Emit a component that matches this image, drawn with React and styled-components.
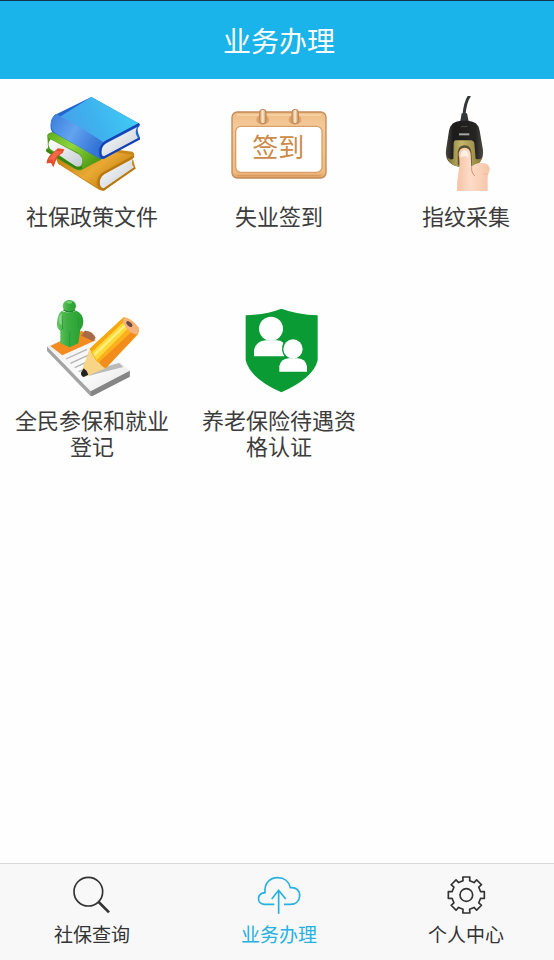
import React, { useState } from 'react';
import styled, { createGlobalStyle } from 'styled-components';

const BooksIcon = () => (
    <TileIcon viewBox="42 33 288 288" aria-hidden="true">
        <defs>
            <linearGradient id="blueTop" x1="0" y1="0.6" x2="1" y2="0.3">
                <stop offset="0" stopColor="#4a9bea" />
                <stop offset="0.5" stopColor="#3fb2ee" />
                <stop offset="1" stopColor="#3fd0f5" />
            </linearGradient>
            <linearGradient id="blueSpine" x1="0" y1="0" x2="1" y2="0.5">
                <stop offset="0" stopColor="#3a7cdc" />
                <stop offset="0.5" stopColor="#62a4f0" />
                <stop offset="1" stopColor="#3474d6" />
            </linearGradient>
            <linearGradient id="greenSpine" x1="0" y1="0" x2="1" y2="0.6">
                <stop offset="0" stopColor="#5cab1c" />
                <stop offset="0.5" stopColor="#8fd63c" />
                <stop offset="1" stopColor="#4f9c14" />
            </linearGradient>
            <linearGradient id="goldSpine" x1="0" y1="0" x2="1" y2="0.6">
                <stop offset="0" stopColor="#b87408" />
                <stop offset="0.6" stopColor="#e9aa34" />
                <stop offset="1" stopColor="#c07c0c" />
            </linearGradient>
            <linearGradient id="pages" x1="0" y1="0" x2="1" y2="1">
                <stop offset="0" stopColor="#ffffff" />
                <stop offset="1" stopColor="#c3cbd2" />
            </linearGradient>
        </defs>
        {/* gold book */}
        <path d="M76 214L200 186L308 200Q318 208 308 219L316 248L222 317Q208 318 200 310L84 236Z" fill="#c88718" />
        <path d="M76 216L182 190L312 210L214 264Q196 280 200 306L88 238Z" fill="url(#goldSpine)" />
        <path d="M309 221Q301 236 313 248L222 310Q206 306 210 284Q213 272 224 266Z" fill="url(#pages)" />
        <path d="M312 214L220 266Q205 276 206 296Q207 315 222 313L316 248" fill="none" stroke="#b9780f" strokeWidth="6" />
        {/* green book */}
        <path d="M52 151Q54 143 70 141L180 170L214 222L156 254Q146 258 136 253L50 201Q44 192 54 189Z" fill="#4b9a18" />
        <path d="M62 163Q50 178 60 191L134 242Q146 248 154 241Q164 222 146 208Z" fill="url(#pages)" />
        <path d="M70 142L52 151Q52 159 62 163L144 203Q165 218 155 251L214 224L208 190Z" fill="url(#greenSpine)" />
        <path d="M51 196L138 248Q146 252 156 247" fill="none" stroke="#32830f" strokeWidth="6" />
        {/* bookmark */}
        <path d="M84 190L103 193L98 204Q82 212 78 226L70 247L63 234L49 235Q52 216 65 206Z" fill="#e34e2b" />
        <path d="M78 197L97 200Q76 211 70 231L66 222L56 226Q62 210 78 197Z" fill="#f1694a" />
        {/* blue book */}
        <path d="M184 36L328 116Q332 121 325 127Q319 136 331 160L223 220Q211 225 203 217L66 140Q58 128 64 106L74 90Z" fill="#2366cf" />
        <path d="M184 36L328 116L226 169Q210 176 206 187L74 91Q66 98 66 110Z" fill="url(#blueTop)" />
        <path d="M78 87Q60 97 64 124Q65 137 76 145L206 220Q207 207 205 194Q208 180 220 172Q150 124 78 87Z" fill="url(#blueSpine)" />
        <path d="M321 127Q312 144 324 159L222 214Q211 211 215 191Q219 179 232 173Z" fill="url(#pages)" />
        <path d="M328 117L228 170Q211 180 211 202Q211 220 222 218L330 160" fill="none" stroke="#153fb5" strokeWidth="6" strokeLinejoin="round" />
    </TileIcon>
);

const CalendarIcon = () => (
    <TileIcon viewBox="42 33 288 288" aria-hidden="true">
        <defs>
            <linearGradient id="wood" x1="0" y1="0" x2="0" y2="1">
                <stop offset="0" stopColor="#f0bd85" />
                <stop offset="0.2" stopColor="#f4c898" />
                <stop offset="0.9" stopColor="#f0bb84" />
                <stop offset="1" stopColor="#e3a468" />
            </linearGradient>
            <linearGradient id="ring" x1="0" y1="0" x2="1" y2="0">
                <stop offset="0" stopColor="#d39a5f" />
                <stop offset="0.5" stopColor="#fdebd2" />
                <stop offset="1" stopColor="#c98a50" />
            </linearGradient>
        </defs>
        <rect x="45" y="81" width="282" height="198" rx="16" fill="url(#wood)" stroke="#c28a56" strokeWidth="4" />
        <path d="M60 90H312" stroke="#fbdcb7" strokeWidth="3" />
        <path d="M60 272H312" stroke="#d99a5e" strokeWidth="4" />
        <rect x="56" y="124" width="259" height="138" rx="16" fill="#fff" stroke="#d9a16a" strokeWidth="4" />
        <ellipse cx="137" cy="104" rx="19" ry="15" fill="#dca26a" />
        <ellipse cx="234" cy="104" rx="19" ry="15" fill="#dca26a" />
        <rect x="128" y="73" width="19" height="43" rx="9" fill="url(#ring)" stroke="#b98555" strokeWidth="3" />
        <rect x="225" y="73" width="19" height="43" rx="9" fill="url(#ring)" stroke="#b98555" strokeWidth="3" />
        <IconText x="184" y="216" textAnchor="middle">签到</IconText>
    </TileIcon>
);

const ScannerIcon = () => (
    <TileIcon viewBox="0 6 288 288" aria-hidden="true">
        <defs>
            <linearGradient id="scannerBody" x1="0" y1="0" x2="1" y2="0">
                <stop offset="0" stopColor="#4a4843" />
                <stop offset="0.2" stopColor="#1c1b1a" />
                <stop offset="0.8" stopColor="#252422" />
                <stop offset="1" stopColor="#4d4b45" />
            </linearGradient>
            <linearGradient id="brass" x1="0" y1="0" x2="1" y2="0">
                <stop offset="0" stopColor="#7f7434" />
                <stop offset="0.4" stopColor="#c4b76c" />
                <stop offset="1" stopColor="#8a7c38" />
            </linearGradient>
            <linearGradient id="skin" x1="0" y1="0" x2="1" y2="0">
                <stop offset="0" stopColor="#f5c2a5" />
                <stop offset="0.4" stopColor="#fddcc8" />
                <stop offset="1" stopColor="#f6c5a9" />
            </linearGradient>
        </defs>
        <path d="M155 5Q142 22 138 62" fill="none" stroke="#34363a" strokeWidth="9" />
        <path d="M131 58H147L152 82H127Z" fill="#34363a" />
        <path d="M128 80H150Q181 82 185 110L195 168Q198 206 166 216Q139 224 111 215Q80 204 84 168L93 110Q98 82 128 80Z" fill="url(#scannerBody)" />
        <path d="M129 98H149" stroke="#63615a" strokeWidth="2" />
        <path d="M123 121H154" stroke="#a4a6a6" strokeWidth="6" />
        <path d="M112 139H160Q168 140 169 148L173 194Q184 199 192 191Q188 213 160 217Q135 222 110 215Q90 207 88 190Q97 200 106 194L107 148Q107 140 112 139Z" fill="url(#brass)" />
        <path d="M119 214V174Q121 155 140 154Q158 155 160 174L162 216Q140 224 119 214Z" fill="#5d522b" />
        <path d="M122 181Q123 162 140 161Q156 162 158 180L160 219Q174 204 200 208Q219 214 214 232Q208 242 209 265V291H117Q117 259 122 231Q127 210 122 181Z" fill="url(#skin)" />
        <path d="M128 182Q130 169 140 168Q149 169 151 182V190Q140 184 128 190Z" fill="#fff0e6" />
        <path d="M161 219Q159 236 171 246" fill="none" stroke="#d98f6c" strokeWidth="3" />
        <path d="M209 239Q201 242 196 239" fill="none" stroke="#e9ab8b" strokeWidth="2" />
        <path d="M124 235Q119 257 119 291" fill="none" stroke="#f9cdb3" strokeWidth="3" />
    </TileIcon>
);

const RegisterIcon = () => (
    <TileIcon viewBox="42 30 288 288" aria-hidden="true">
        <defs>
            <linearGradient id="figure" x1="0" y1="0" x2="1" y2="0">
                <stop offset="0" stopColor="#67c665" />
                <stop offset="0.4" stopColor="#3dae42" />
                <stop offset="1" stopColor="#24a031" />
            </linearGradient>
            <linearGradient id="paper" x1="0" y1="0" x2="1" y2="1">
                <stop offset="0" stopColor="#ececec" />
                <stop offset="0.6" stopColor="#fcfcfc" />
                <stop offset="1" stopColor="#e4e4e4" />
            </linearGradient>
        </defs>
        <path d="M51 169L182 301L299 242V260L183 320L51 183Z" fill="#a4a4a4" />
        <path d="M182 301L299 242V260L183 320Z" fill="#858585" />
        <path d="M51 169L169 121L299 242L182 304Z" fill="url(#paper)" />
        <path d="M61 168L155 122L197 151L97 196Z" fill="#f48b20" />
        <path d="M154 137L164 122Q186 121 197 143L190 154Z" fill="#a66a44" />
        <path d="M108 207L171 178M121 220L180 193M134 233L168 217M146 245L164 237" fill="none" stroke="#b4b4b4" strokeWidth="4" />
        <path d="M174 259L207 235L268 219L280 231L206 250Z" fill="#999" opacity="0.65" />
        {/* pencil */}
        <path d="M179 176L281 82Q303 83 325 112Q330 124 323 134L227 235L196 222Z" fill="#fbb01c" />
        <path d="M179 176L281 82L290 94L189 190Z" fill="#f7a711" />
        <path d="M186 186L287 90L299 110L200 210Z" fill="#ffd93a" />
        <path d="M190 192L290 97L294 103L194 199Z" fill="#fff07c" />
        <path d="M205 219L308 122L325 130L227 235Z" fill="#f28c1b" />
        <path d="M179 176Q184 194 192 200Q198 216 208 218Q217 233 227 235L166 260Q151 257 154 247Z" fill="#f8d586" />
        <path d="M161 235Q172 242 175 254L161 261Q150 257 154 247Z" fill="#242424" />
        <path d="M281 82Q304 86 325 112Q329 122 323 134Q304 133 289 114Q275 97 281 82Z" fill="#f5b27b" />
        <ellipse cx="298" cy="102" rx="11" ry="6" transform="rotate(42 298 102)" fill="#6c4a48" />
        {/* figure */}
        <path d="M95 63Q115 72 139 62Q157 70 160 91Q160 112 151 119L145 160L119 172L91 160V123Q79 115 81 96Q84 70 95 63Z" fill="url(#figure)" />
        <path d="M96 78L98 117L94 119M144 82L146 117" fill="none" stroke="#2a9a37" strokeWidth="3" />
        <path d="M119 124V169" stroke="#2a9a37" strokeWidth="3" />
        <ellipse cx="118" cy="48" rx="20" ry="18" fill="url(#figure)" />
        <path d="M100 59Q118 72 136 59" fill="none" stroke="#1d862a" strokeWidth="4" />
        <ellipse cx="118" cy="37" rx="9" ry="4" fill="#71cf70" />
        <path d="M87 82Q88 74 95 71V106Q86 102 87 82Z" fill="#8bd88a" />
    </TileIcon>
);

const ShieldIcon = () => (
    <TileIcon viewBox="33 30 288 288" aria-hidden="true">
        <path d="M184 56Q232 74 293 76V211Q280 265 184 307Q90 265 77 211V76Q137 74 184 56Z" fill="#0a9b35" />
        <circle cx="153" cy="116" r="36" fill="#fff" />
        <path d="M102 199V181Q108 152 138 151H170Q182 151 190 158Q181 178 193 199Z" fill="#fff" />
        <circle cx="219" cy="177" r="29" fill="#fff" />
        <path d="M178 245V229Q182 207 206 205H233Q257 207 261 229V245Z" fill="#fff" />
    </TileIcon>
);

const SearchIcon = () => (
    <TabIcon viewBox="0 0 132 132" aria-hidden="true">
        <circle cx="55" cy="56" r="43" />
        <path d="M86 87L117 118" strokeWidth="8" />
    </TabIcon>
);

const CloudIcon = () => (
    <TabIcon viewBox="0 0 132 132" aria-hidden="true">
        <path d="M52 94H22C-2 92 -1 61 24 59C21 32 38 14 62 14C82 14 96 26 100 44C118 42 129 54 128 69C127 84 116 94 100 94H81" />
        <path d="M65 122V52M44 78L65 52L86 78" />
    </TabIcon>
);

const toothPoints = (angle) => (
    [[44, -13], [55, -11], [55, 11], [44, 13]].map(([r, offset]) => {
        const rad = ((angle + offset) * Math.PI) / 180;
        return `${(67 + r * Math.cos(rad)).toFixed(1)},${(66 + r * Math.sin(rad)).toFixed(1)}`;
    }).join(' ')
);

const gearPoints = [0, 45, 90, 135, 180, 225, 270, 315].map(toothPoints).join(' ');

const GearIcon = () => (
    <TabIcon viewBox="0 0 132 132" aria-hidden="true">
        <polygon points={gearPoints} strokeLinejoin="round" />
        <circle cx="67" cy="66" r="19" />
    </TabIcon>
);

const services = [
    { id: 'policy', label: '社保政策文件', Icon: BooksIcon },
    { id: 'checkin', label: '失业签到', Icon: CalendarIcon },
    { id: 'fingerprint', label: '指纹采集', Icon: ScannerIcon },
    { id: 'register', label: '全民参保和就业登记', Icon: RegisterIcon },
    { id: 'pension', label: '养老保险待遇资格认证', Icon: ShieldIcon },
];

const tabs = [
    { id: 'query', label: '社保查询', Icon: SearchIcon },
    { id: 'business', label: '业务办理', Icon: CloudIcon },
    { id: 'mine', label: '个人中心', Icon: GearIcon },
];

function App() {

    const [active, setActive] = useState('business');

    return (
        <React.Fragment>
            <GlobalStyle />
            <Page>
                <Header>
                    <Title>业务办理</Title>
                </Header>
                <Services>
                    {services.map(({ id, label, Icon }) =>
                        <Service key={id} href={`#${id}`}>
                            <Icon />
                            <ServiceLabel>{label}</ServiceLabel>
                        </Service>
                    )}
                </Services>
                <TabBar>
                    {tabs.map(({ id, label, Icon }) =>
                        <Tab key={id} type="button" $active={active === id} onClick={() => setActive(id)}>
                            <Icon />
                            {label}
                        </Tab>
                    )}
                </TabBar>
            </Page>
        </React.Fragment>
    );
}

export default App;

const GlobalStyle = createGlobalStyle`
    * {
        box-sizing: border-box;
    }
    body {
        margin: 0;
        background: #fefefe;
        font-family: "Noto Sans CJK SC", sans-serif;
    }
`;

const Page = styled.div`
    display: flex;
    flex-direction: column;
    min-height: 100vh;
`;

const Header = styled.header`
    display: flex;
    align-items: center;
    justify-content: center;
    padding: 18px 0 18px 4px;
    border-top: 1px solid #12344a;
    background: #1ab3ea;
`;

const Title = styled.h1`
    margin: 0;
    color: #fff;
    font-size: 28px;
    font-weight: 400;
    line-height: 42px;
`;

const Services = styled.main`
    flex: 1;
    display: grid;
    grid-template-columns: repeat(3, 1fr);
    align-content: start;
    gap: 72px 11px;
    padding: 17px 0 24px 4px;
`;

const Service = styled.a`
    display: flex;
    flex-direction: column;
    align-items: center;
    gap: 10px;
    padding: 0 8px;
    color: #3c3c3c;
    text-decoration: none;
`;

const ServiceLabel = styled.span`
    font-size: 22px;
    line-height: 26px;
    text-align: center;
`;

const TileIcon = styled.svg`
    width: 96px;
    height: 96px;
`;

const IconText = styled.text`
    font-size: 78px;
    fill: #cc8a48;
`;

const TabBar = styled.nav`
    display: grid;
    grid-template-columns: repeat(3, 1fr);
    gap: 11px;
    padding: 9px 0 12px 4px;
    border-top: 1px solid #d9d9d9;
    background: #f8f8f8;
`;

const Tab = styled.button`
    display: flex;
    flex-direction: column;
    align-items: center;
    gap: 2px;
    padding: 0;
    border: 0;
    background: none;
    color: ${props => props.$active ? '#27b1e2' : '#333'};
    font-family: inherit;
    font-size: 19px;
    line-height: 29px;
    cursor: pointer;
`;

const TabIcon = styled.svg`
    width: 44px;
    height: 44px;
    fill: none;
    stroke: currentColor;
    stroke-width: 5;
`;
